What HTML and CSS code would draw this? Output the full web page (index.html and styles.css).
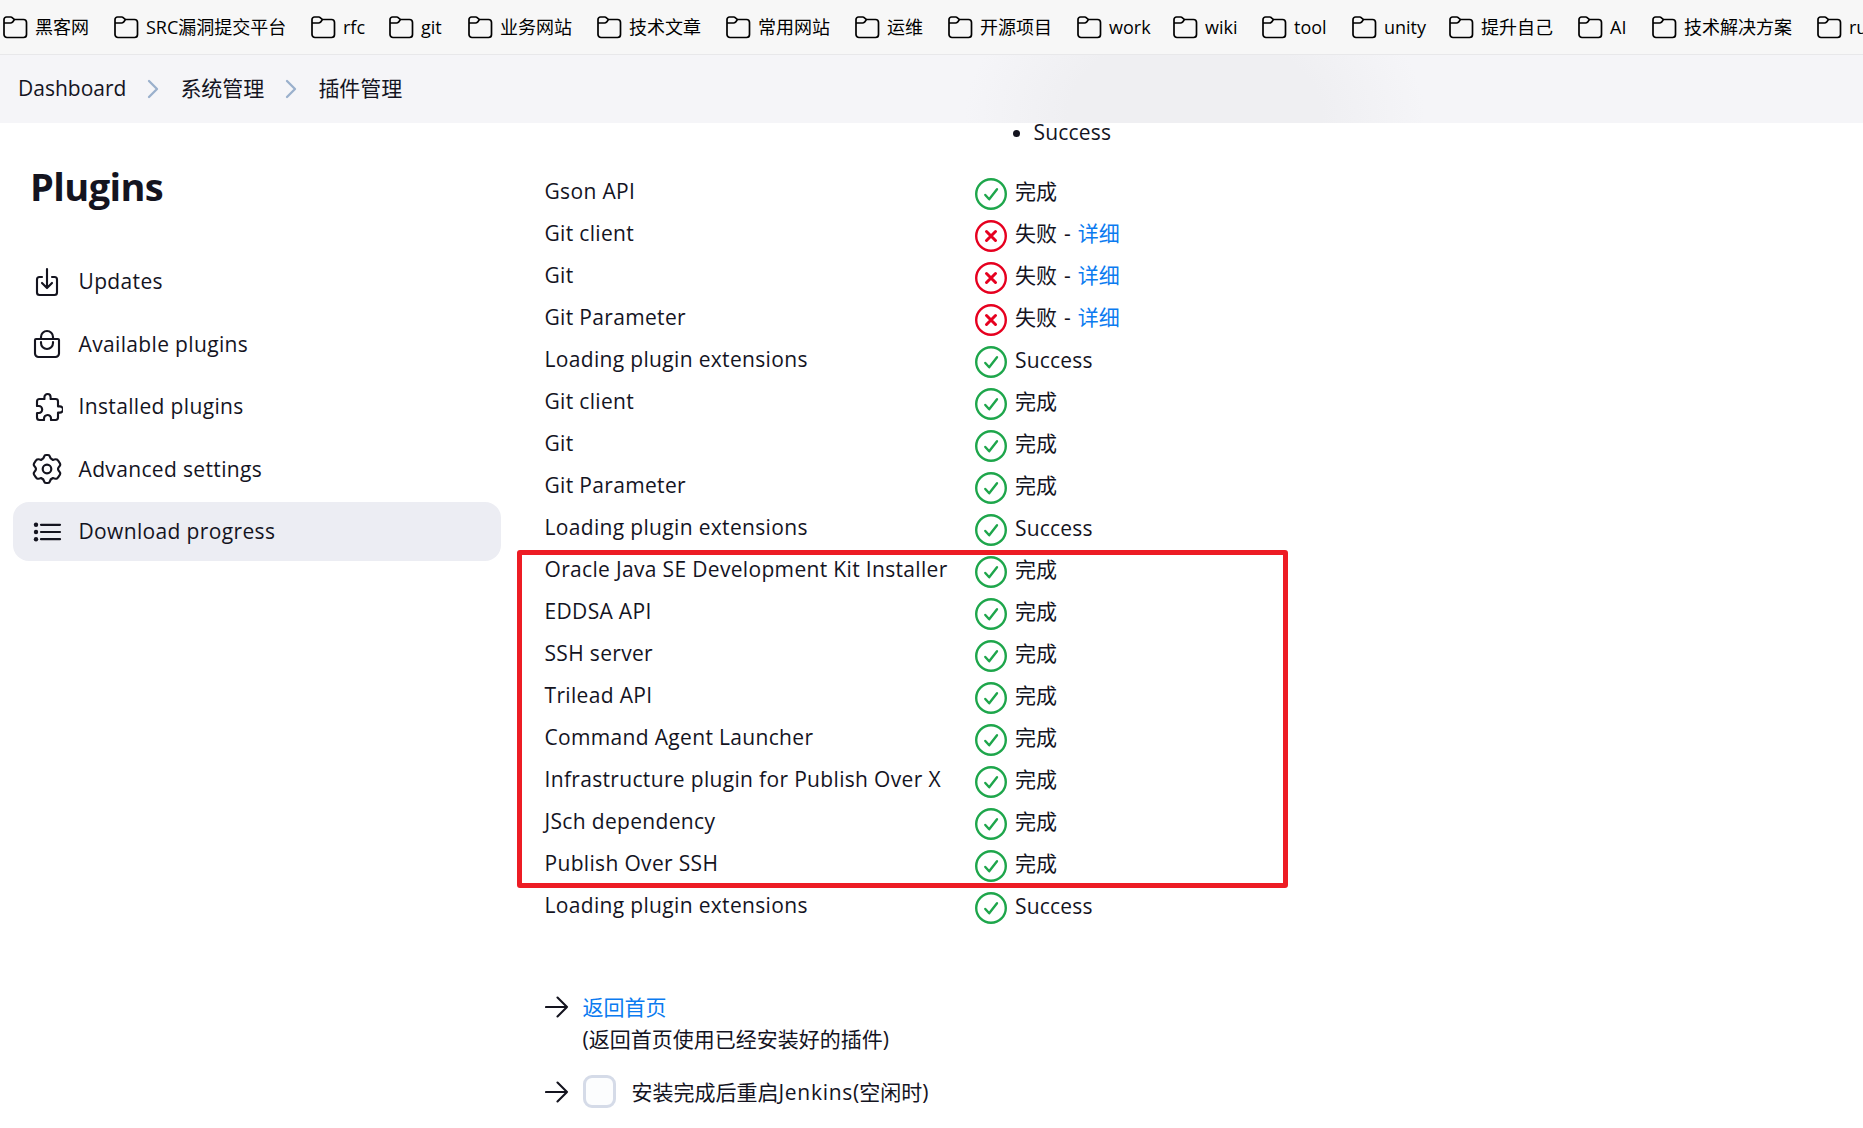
FILE: index.html
```html
<!DOCTYPE html>
<html lang="zh-CN">
<head>
<meta charset="utf-8">
<title>Plugins</title>
<link rel="stylesheet" href="styles.css">
</head>
<body>
<svg class="sprite" aria-hidden="true">
  <symbol id="folder" viewBox="0 0 26 24"><path d="M2 7V4.5A2.5 2.5 0 0 1 4.500 2h4.200c.7 0 1.300.3 1.800.8L12.300 4.500h9.200A3 3 0 0 1 24.500 7.500v12A3 3 0 0 1 21.500 22.500H5A3 3 0 0 1 2 19.500zM2 8h6.500c.8 0 1.500-.3 2-.8l2-2.700"/></symbol>
  <symbol id="chevron" viewBox="0 0 12 20"><path d="M2 2l8 8-8 8"/></symbol>
  <symbol id="ok" viewBox="0 0 32 32"><circle cx="16" cy="16" r="14.800"/><path d="M10.300 17l3.900 4.300 7.800-10"/></symbol>
  <symbol id="fail" viewBox="0 0 32 32"><circle cx="16" cy="16" r="14.800"/><path class="cross" d="M11.500 11.500l9 9m0-9l-9 9"/></symbol>
  <symbol id="arrow" viewBox="0 0 24 24"><path d="M1 12h21M12.500 2.500L22 12l-9.500 9.500"/></symbol>
  <symbol id="download" viewBox="0 0 512 512"><path d="M336 176h40a40 40 0 0140 40v208a40 40 0 01-40 40H136a40 40 0 01-40-40V216a40 40 0 0140-40h40M176 272l80 80 80-80M256 48v288"/></symbol>
  <symbol id="bag" viewBox="0 0 512 512"><path d="M80 176a16 16 0 00-16 16v216c0 30.240 25.760 56 56 56h272c30.240 0 56-24.510 56-54.750V192a16 16 0 00-16-16zM160 176v-32a96 96 0 01192 0v32M160 224v16a96 96 0 00192 0v-16"/></symbol>
  <symbol id="puzzle" viewBox="-48 0 512 512"><path d="M413.660 246.100H386a2 2 0 01-2-2v-77.240A38.860 38.860 0 00345.140 128H267.900a2 2 0 01-2-2V98.340c0-27.140-21.500-49.860-48.640-50.330a49.530 49.530 0 00-50.400 49.510V126a2 2 0 01-2 2H87.620A39.740 39.740 0 0048 167.620V238a2 2 0 002 2h26.910c29.370 0 53.680 25.480 54.090 54.850.42 29.870-23.510 57.150-53.290 57.150H50a2 2 0 00-2 2v70.380A39.740 39.740 0 0087.620 464H158a2 2 0 002-2v-20.930c0-30.280 24.750-56.350 55-57.060 30.100-.7 57 20.310 57 50.280V462a2 2 0 002 2h71.140A38.860 38.860 0 00384 425.140v-78a2 2 0 012-2h28.480c27.630 0 49.520-22.670 49.520-50.400s-23.700-48.640-50.340-48.640z"/></symbol>
  <symbol id="gear" viewBox="0 0 32 32"><circle cx="16" cy="16" r="4.300"/><path d="M13.200 3.500Q13.500 2 15 2h2q1.500 0 1.800 1.500Q19.300 6 21.800 6.900Q24.300 5.800 26 6.500Q27 7 29 10.500Q29.700 12 28.700 13Q27 14.800 27 16T28.700 19Q29.700 20 29 21.500Q27 25 26 25.500Q24.300 26.200 21.800 25.100Q19.300 26 18.800 28.500Q18.500 30 17 30h-2q-1.500 0-1.800-1.500Q12.700 26 10.200 25.100Q7.700 26.200 6 25.500Q5 25 3 21.500Q2.300 20 3.300 19Q5 17.200 5 16T3.300 13Q2.300 12 3 10.500Q5 7 6 6.500Q7.700 5.800 10.200 6.900Q12.700 6 13.200 3.500z"/></symbol>
  <symbol id="list" viewBox="0 0 32 32"><path d="M10 8.800h19M10 16h19M10 23.200h19"/><g class="dots"><circle cx="5" cy="8.800" r="2.200"/><circle cx="5" cy="16" r="2.200"/><circle cx="5" cy="23.200" r="2.200"/></g></symbol>
</svg>

<nav class="bookmarks">
  <a><svg><use href="#folder"/></svg>黑客网</a>
  <a><svg><use href="#folder"/></svg>SRC漏洞提交平台</a>
  <a><svg><use href="#folder"/></svg>rfc</a>
  <a><svg><use href="#folder"/></svg>git</a>
  <a><svg><use href="#folder"/></svg>业务网站</a>
  <a><svg><use href="#folder"/></svg>技术文章</a>
  <a><svg><use href="#folder"/></svg>常用网站</a>
  <a><svg><use href="#folder"/></svg>运维</a>
  <a><svg><use href="#folder"/></svg>开源项目</a>
  <a><svg><use href="#folder"/></svg>work</a>
  <a><svg><use href="#folder"/></svg>wiki</a>
  <a><svg><use href="#folder"/></svg>tool</a>
  <a><svg><use href="#folder"/></svg>unity</a>
  <a><svg><use href="#folder"/></svg>提升自己</a>
  <a><svg><use href="#folder"/></svg>AI</a>
  <a><svg><use href="#folder"/></svg>技术解决方案</a>
  <a><svg><use href="#folder"/></svg>ru</a>
</nav>

<header class="breadcrumbs">
  <a>Dashboard</a>
  <svg><use href="#chevron"/></svg>
  <a>系统管理</a>
  <svg><use href="#chevron"/></svg>
  <a>插件管理</a>
</header>

<div class="page">
  <aside class="sidebar">
    <h1>Plugins</h1>
    <a class="task"><svg><use href="#download"/></svg><span>Updates</span></a>
    <a class="task"><svg><use href="#bag"/></svg><span>Available plugins</span></a>
    <a class="task"><svg><use href="#puzzle"/></svg><span>Installed plugins</span></a>
    <a class="task"><svg><use href="#gear"/></svg><span>Advanced settings</span></a>
    <a class="task active"><svg><use href="#list"/></svg><span>Download progress</span></a>
  </aside>

  <main class="main">
    <ul class="prep"><li>Success</li></ul>
    <div class="rows">
      <div class="row"><span class="name">Gson API</span><svg class="ok"><use href="#ok"/></svg><span>完成</span></div>
      <div class="row"><span class="name">Git client</span><svg class="fail"><use href="#fail"/></svg><span class="failed">失败 - <a class="link">详细</a></span></div>
      <div class="row"><span class="name">Git</span><svg class="fail"><use href="#fail"/></svg><span class="failed">失败 - <a class="link">详细</a></span></div>
      <div class="row"><span class="name">Git Parameter</span><svg class="fail"><use href="#fail"/></svg><span class="failed">失败 - <a class="link">详细</a></span></div>
      <div class="row"><span class="name">Loading plugin extensions</span><svg class="ok"><use href="#ok"/></svg><span class="latin">Success</span></div>
      <div class="row"><span class="name">Git client</span><svg class="ok"><use href="#ok"/></svg><span>完成</span></div>
      <div class="row"><span class="name">Git</span><svg class="ok"><use href="#ok"/></svg><span>完成</span></div>
      <div class="row"><span class="name">Git Parameter</span><svg class="ok"><use href="#ok"/></svg><span>完成</span></div>
      <div class="row"><span class="name">Loading plugin extensions</span><svg class="ok"><use href="#ok"/></svg><span class="latin">Success</span></div>
      <div class="marked">
        <div class="row"><span class="name">Oracle Java SE Development Kit Installer</span><svg class="ok"><use href="#ok"/></svg><span>完成</span></div>
        <div class="row"><span class="name">EDDSA API</span><svg class="ok"><use href="#ok"/></svg><span>完成</span></div>
        <div class="row"><span class="name">SSH server</span><svg class="ok"><use href="#ok"/></svg><span>完成</span></div>
        <div class="row"><span class="name">Trilead API</span><svg class="ok"><use href="#ok"/></svg><span>完成</span></div>
        <div class="row"><span class="name">Command Agent Launcher</span><svg class="ok"><use href="#ok"/></svg><span>完成</span></div>
        <div class="row"><span class="name">Infrastructure plugin for Publish Over X</span><svg class="ok"><use href="#ok"/></svg><span>完成</span></div>
        <div class="row"><span class="name">JSch dependency</span><svg class="ok"><use href="#ok"/></svg><span>完成</span></div>
        <div class="row"><span class="name">Publish Over SSH</span><svg class="ok"><use href="#ok"/></svg><span>完成</span></div>
      </div>
      <div class="row"><span class="name">Loading plugin extensions</span><svg class="ok"><use href="#ok"/></svg><span class="latin">Success</span></div>
    </div>
    <div class="next">
      <svg><use href="#arrow"/></svg>
      <div><a class="link">返回首页</a><br>(返回首页使用已经安装好的插件)</div>
    </div>
    <label class="next restart">
      <svg><use href="#arrow"/></svg>
      <span class="box"></span>
      <span>安装完成后重启<span class="product">Jenkins</span>(空闲时)</span>
    </label>
  </main>
</div>
</body>
</html>
```
FILE: styles.css
```css
* { box-sizing: border-box; }
body {
  margin: 0;
  height: 1128px;
  overflow: hidden;
  background: #fff;
  color: #14141f;
  font: 21px/32px "Open Sans", "Noto Sans CJK SC", sans-serif;
}
svg { flex: none; fill: none; stroke: currentColor; stroke-linecap: round; stroke-linejoin: round; }
.sprite { display: none; }
.latin { letter-spacing: 0.2px; }
.product { letter-spacing: 0.7px; }
.link { color: #0b7bf0; }

.bookmarks {
  display: grid;
  grid-template-columns: 111px 197px 78px 79px 129px 129px 129px 93px 129px 96px 89px 90px 97px 129px 74px 165px 80px;
  height: 55px;
  padding-left: 2px;
  background: #f7f7f7;
  border-bottom: 1px solid #e8e8ea;
  color: #000;
  font-size: 18px;
  overflow: hidden;
}
.bookmarks a { display: flex; align-items: center; gap: 7px; white-space: nowrap; }
.bookmarks svg { width: 26px; height: 24px; stroke-width: 1.700; }

.breadcrumbs {
  display: flex;
  align-items: center;
  height: 68px;
  padding-left: 18px;
  background:
    radial-gradient(ellipse 230px 150px at 1195px 60px, #efeff2 55%, #f5f5f800 100%),
    #f5f5f8;
}
.breadcrumbs a { margin-bottom: 2px; }
.breadcrumbs svg { width: 12px; height: 20px; margin: 0 21px; color: #9ab0cc; stroke-width: 2.300; }

.page { display: flex; height: 1005px; overflow: hidden; }
.sidebar { width: 501px; padding: 38px 0 0 13px; flex: none; }
.sidebar h1 { margin: 0 0 41px 17px; font-size: 38px; line-height: 50px; font-weight: 700; letter-spacing: -0.600px; }
.task { display: flex; align-items: center; gap: 16px; height: 59px; margin-bottom: 3.500px; padding-left: 17.500px; border-radius: 16px; letter-spacing: 0.350px; }
.task svg { width: 32px; height: 32px; stroke-width: 34; }
.task span { margin-bottom: 1px; }
.task.active { background: #ecedf3; }
#gear, #list { stroke-width: 2.200; }
.dots { fill: currentColor; stroke: none; }

.main { padding-left: 43.500px; }
.prep { margin: 0 0 0 449px; padding-left: 40px; line-height: 18px; letter-spacing: 0.200px; }
.rows { margin-top: 32px; }
.row { display: flex; align-items: center; height: 42px; }
.row .name { width: 430.500px; margin-bottom: 7px; letter-spacing: 0.330px; white-space: nowrap; }
.row svg { width: 32px; height: 32px; margin-right: 8px; stroke-width: 2.400; }
.row svg + span { margin-bottom: 6px; }
.row svg + .latin { margin-bottom: 5px; }
.failed { word-spacing: 1.500px; }
.ok { color: #1ea64b; }
.fail { color: #e6001f; }
.cross { stroke-width: 3; }

/* Red frame around the newly installed plugins */
.marked { width: 771px; margin: -1px 0 -1px -28px; padding-left: 23px; border: 5px solid #ed1c24; border-radius: 3px; }
.marked .row:first-child { margin-top: -4px; }
.marked .row:last-child { margin-bottom: -4px; }

.next { display: flex; align-items: flex-start; margin-top: 62px; }
.next svg { width: 24px; height: 24px; margin: 4px 14px 0 0; stroke-width: 2.100; }
.restart { align-items: center; margin-top: 20px; }
.restart svg { margin-top: 0; }
.box { width: 33px; height: 33px; margin-right: 16px; border: 3px solid #d5dbe8; border-radius: 9px; background: #fcfdfe; }
```
